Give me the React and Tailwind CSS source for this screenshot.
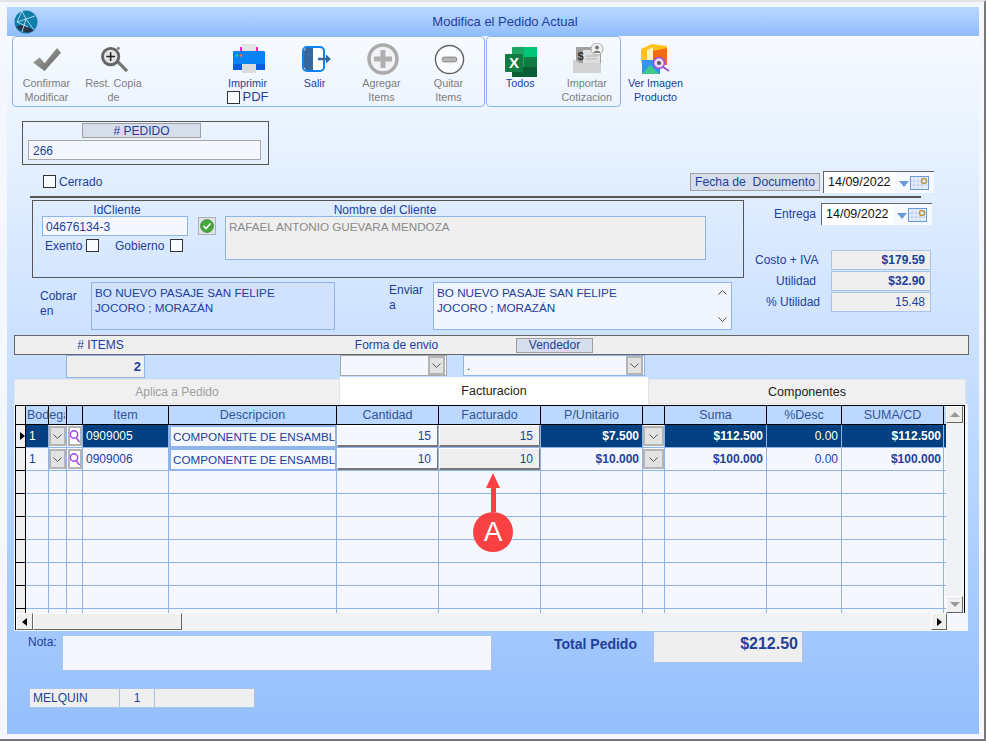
import React from "react";

const BLUE = "text-[#233f9a]";

const COLS = "grid grid-cols-[10px_23px_18px_16px_86px_168px_102px_102px_102px_22px_102px_75px_102px_3px]";

const ROWS = [
  { sel: true, bod: "1", item: "0909005", cant: "15", fact: "15", price: "$7.500", suma: "$112.500", desc: "0.00", total: "$112.500" },
  { sel: false, bod: "1", item: "0909006", cant: "10", fact: "10", price: "$10.000", suma: "$100.000", desc: "0.00", total: "$100.000" },
];

const HEADERS = ["", "Bodega", "", "", "Item", "Descripcion", "Cantidad", "Facturado", "P/Unitario", "", "Suma", "%Desc", "SUMA/CD", ""];

function Logo() {
  return (
    <svg width="24" height="24" viewBox="0 0 24 24" className="ml-[7px] mt-[3px]">
      <circle cx="12" cy="12" r="11.5" fill="#0f7ea8" />
      <path d="M2 17 C8 23 16 24 20 20 L14 17 L6 15 Z" fill="#26364a" />
      <path d="M8 1 L3 12 L12 9 L21 6 M8 1 L12 9 L20 20 M3 12 L14 17 M12 9 L8 22" stroke="#d6eaf5" strokeWidth="0.8" fill="none" />
    </svg>
  );
}

function CheckIcon() {
  return (
    <svg width="29" height="25" viewBox="0 0 30 26">
      <defs>
        <linearGradient id="chk" x1="0" y1="0" x2="1" y2="1">
          <stop offset="0" stopColor="#b0b0b0" />
          <stop offset="1" stopColor="#5c5c5c" />
        </linearGradient>
      </defs>
      <path d="M1 16 L8 11 L13 17 L26 1 L30 6 L13 25 Z" fill="url(#chk)" />
    </svg>
  );
}

function ZoomIcon() {
  return (
    <svg width="29" height="26" viewBox="0 0 30 27" className="translate-x-[1px]">
      <path d="M18 16 L27 25" stroke="#777" strokeWidth="3.5" strokeLinecap="round" />
      <circle cx="11" cy="11" r="8.500" fill="#e2e2e2" stroke="#666" strokeWidth="3" />
      <path d="M6.5 11 H15.5 M11 6.5 V15.5" stroke="#222" strokeWidth="1.6" />
      <circle cx="19" cy="2.5" r="1.5" fill="#777" />
    </svg>
  );
}

function PrinterIcon() {
  return (
    <svg width="32" height="30" viewBox="0 0 32 30" className="translate-x-[1px]">
      <rect x="7" y="3" width="18" height="8" fill="#ff1fc0" />
      <rect x="9" y="0" width="14" height="11" fill="#e4e4e4" />
      <rect x="0" y="7" width="32" height="19" rx="1" fill="#0a84f5" />
      <rect x="0" y="20" width="32" height="6" fill="#0a5fe0" />
      <circle cx="4" cy="11.500" r="1.200" fill="#39d98a" />
      <circle cx="8" cy="11.500" r="1.200" fill="#ff6a3d" />
      <rect x="9" y="20" width="14" height="9" fill="#dcdcdc" />
    </svg>
  );
}

function ExitIcon() {
  return (
    <svg width="30" height="26" viewBox="0 0 30 26" className="translate-x-[2px]">
      <rect x="1" y="1" width="21" height="24" rx="4" fill="#fff" stroke="#0a84f5" strokeWidth="2" />
      <path d="M2 5 L4 2 H11 V24 H4 L2 21 Z" fill="#36689f" />
      <path d="M16 13 H25" stroke="#36689f" strokeWidth="2.500" />
      <path d="M24 8.500 L29 13 L24 17.500 Z" fill="#36689f" />
    </svg>
  );
}

function PlusIcon() {
  return (
    <svg width="32" height="32" viewBox="0 0 32 32" className="translate-x-[1px]">
      <circle cx="16" cy="16" r="14" fill="#f1f3f6" stroke="#ababab" strokeWidth="3.500" />
      <path d="M16 7 V25 M7 16 H25" stroke="#b0b0b0" strokeWidth="5" />
    </svg>
  );
}

function MinusIcon() {
  return (
    <svg width="31" height="31" viewBox="0 0 32 32" className="translate-x-[1px]">
      <circle cx="16" cy="16" r="14.500" fill="#fbfcff" stroke="#666" strokeWidth="1.500" />
      <rect x="8.500" y="13.500" width="15" height="5" rx="2" fill="#b5b5b5" stroke="#777" strokeWidth="0.800" />
    </svg>
  );
}

function ExcelIcon() {
  return (
    <svg width="32" height="30" viewBox="0 0 32 30" className="translate-x-[1px] translate-y-[3px]">
      <rect x="7" y="0" width="25" height="30" rx="1" fill="#21a366" />
      <rect x="19" y="0" width="13" height="10" fill="#00c476" />
      <rect x="19" y="10" width="13" height="10" fill="#107c41" />
      <rect x="7" y="20" width="25" height="10" fill="#0b5e33" />
      <rect x="0" y="7" width="18" height="18" rx="1" fill="#107c41" />
      <text x="9" y="21" textAnchor="middle" fill="#fff" className="font-['Liberation_Sans',sans-serif] text-[15px] font-bold">X</text>
    </svg>
  );
}

function ImportIcon() {
  return (
    <svg width="32" height="32" viewBox="0 0 32 32" className="translate-x-[2px]">
      <rect x="3" y="4" width="25" height="20" fill="#a0a0a0" />
      <rect x="10" y="7" width="17" height="15" fill="#dedede" />
      <path d="M13 13 H24 M13 16 H24" stroke="#b5b5b5" />
      <path d="M0 16 L7 20 H28 V30 H0 Z" fill="#d2d2d2" />
      <text x="7.500" y="17" textAnchor="middle" fill="#333" className="font-['Liberation_Sans',sans-serif] text-[11px] font-bold">$</text>
      <circle cx="24" cy="6" r="6" fill="#f2f2f2" stroke="#aaa" />
      <circle cx="24" cy="4.500" r="2" fill="#777" />
      <path d="M20.500 10 C21 7 27 7 27.500 10 Z" fill="#777" />
    </svg>
  );
}

function ImageIcon() {
  return (
    <svg width="32" height="32" viewBox="0 0 32 32">
      <path d="M1 6 L12 1 L27 3 V20 H1 Z" fill="#ffc21a" />
      <path d="M7 7 L13 4 V22 H7 Z" fill="#fff3c4" />
      <path d="M13 8 L27 5 V22 H13 Z" fill="#f46a12" />
      <rect x="2" y="17" width="18" height="14" fill="#2f96ef" />
      <path d="M2 31 L10 22 L19 31 Z" fill="#41c98b" />
      <circle cx="19" cy="20" r="5.500" fill="#e9d8f7" stroke="#9a4fd0" strokeWidth="1.500" />
      <circle cx="19" cy="20" r="2" fill="#555" />
      <path d="M23 24 L29 28" stroke="#9a4fd0" strokeWidth="2" />
    </svg>
  );
}

function ToolBtn({ icon, lines, muted, children }) {
  return (
    <div className="w-[67px] h-[69px] flex flex-col items-center">
      <div className="h-[39px] pt-[5px] flex items-center justify-center">{icon}</div>
      <div className={`text-[10.8px] leading-[14px] text-center whitespace-nowrap ${muted ? "text-[#7d7d7d]" : BLUE}`}>
        {lines.map((l) => <div key={l}>{l}</div>)}
        {children}
      </div>
    </div>
  );
}

function Check({ className = "" }) {
  return <span className={`block w-[13px] h-[13px] border border-[#333] bg-[#f8fbff] ${className}`} />;
}

function Chevron() {
  return (
    <svg width="9" height="5" viewBox="0 0 9 5" fill="none">
      <path d="M0.500 0.500 L4.500 4.500 L8.500 0.500" stroke="#555" />
    </svg>
  );
}

function DropBtn({ className = "" }) {
  return (
    <span className={`flex items-center justify-center bg-[#e2e2e2] border-2 border-[#b4b4b4] ${className}`}>
      <Chevron />
    </span>
  );
}

function DateField({ className = "" }) {
  return (
    <div className={`w-[111px] h-[22px] flex items-center bg-[#f6f9ff] border-t border-l border-t-[#666] border-l-[#666] ${className}`}>
      <span className="w-[71px] pl-[4px] h-full flex items-center bg-white text-[12.5px] text-[#111]">14/09/2022</span>
      <span className="ml-[4px] w-0 h-0 mt-[2px] border-l-[5px] border-r-[5px] border-t-[6px] border-l-transparent border-r-transparent border-t-[#6a9ad8]" />
      <svg width="19" height="14" viewBox="0 0 19 14" className="ml-[1px]">
        <rect x="0.500" y="0.500" width="18" height="13" fill="#e6eefb" stroke="#6a9ad8" />
        <path d="M4 1 V13 M8 1 V13 M12 1 V13 M1 5 H18 M1 9 H18" stroke="#b5c9e8" strokeWidth="0.700" />
        <circle cx="14" cy="5" r="2.500" fill="#e6eefb" stroke="#b89a50" strokeWidth="1.500" />
      </svg>
    </div>
  );
}

function Stat({ label, value, bold, pad }) {
  return (
    <div className="flex items-center h-[20px]">
      <span className={`w-[87px] text-[12px] whitespace-nowrap ${pad} ${BLUE}`}>{label}</span>
      <span className={`w-[100px] h-[20px] flex items-center justify-end pr-[5px] bg-[#efefef] border border-[#a9c4ea] text-[12px] ${BLUE} ${bold ? "font-bold" : ""}`}>{value}</span>
    </div>
  );
}

function LensBtn() {
  return (
    <span className="flex items-center justify-center w-[14px] h-[20px] ml-[1px] bg-white border-2 border-[#b4b4b4]">
      <svg width="10" height="14" viewBox="0 0 10 14" fill="none">
        <circle cx="4" cy="5.500" r="3.700" stroke="#9a3fe0" strokeWidth="1.400" />
        <path d="M6.500 9 L9.500 13" stroke="#9a3fe0" strokeWidth="1.400" />
      </svg>
    </span>
  );
}

function GridRow({ row }) {
  const { sel } = row;
  const base = `h-[23px] border-b border-r border-[#8fb4ea] flex items-center text-[12px] ${sel ? "bg-[#024081] text-white" : "text-[#233f9a]"}`;
  const raised = "h-[23px] border-b border-r border-[#8fb4ea] flex items-center text-[12px] text-[#233f9a]";
  return (
    <div className={COLS}>
      <div className="h-[23px] bg-[#efefef] border-b border-r border-black flex items-center">
        {sel && <span className="ml-[4px] w-0 h-0 border-l-[5px] border-y-[4px] border-l-black border-y-transparent" />}
      </div>
      <div className={`${base} pl-[3px]`}>{row.bod}</div>
      <div className={`${base} !bg-[#f4f7fe]`}><DropBtn className="w-[17px] h-[20px]" /></div>
      <div className={`${base} !bg-[#f4f7fe]`}><LensBtn /></div>
      <div className={`${base} pl-[3px]`}>{row.item}</div>
      <div className="h-[23px] border-[2px] border-[#8fb4ea] bg-[#f4f7fe] flex items-center pl-[2px] text-[11.7px] text-[#233f9a] overflow-hidden whitespace-nowrap">COMPONENTE DE ENSAMBL</div>
      <div className={raised}>
        <span className="w-full h-[22px] flex items-center justify-end pr-[6px] bg-[#f4f7fe] border border-white border-r-[#777] border-b-2 border-b-[#777]">{row.cant}</span>
      </div>
      <div className={raised}>
        <span className="w-full h-[22px] flex items-center justify-end pr-[6px] bg-[#efefef] border border-white border-r-[#777] border-b-2 border-b-[#777]">{row.fact}</span>
      </div>
      <div className={`${base} justify-end pr-[3px] font-bold text-[12.5px]`}>{row.price}</div>
      <div className={`${base} !bg-[#f4f7fe]`}><DropBtn className="w-[21px] h-[20px]" /></div>
      <div className={`${base} justify-end pr-[3px] font-bold text-[12.5px]`}>{row.suma}</div>
      <div className={`${base} justify-end pr-[3px]`}>{row.desc}</div>
      <div className={`${base} justify-end pr-[2px] font-bold text-[12.5px]`}>{row.total}</div>
      <div className={`${base}`} />
    </div>
  );
}

function EmptyRow() {
  return (
    <div className={COLS}>
      <div className="h-[23px] bg-[#efefef] border-b border-r border-black" />
      {HEADERS.slice(1).map((_, i) => <div key={i} className="h-[23px] border-b border-r border-[#8fb4ea]" />)}
    </div>
  );
}

function ScrollBtn({ children, className = "" }) {
  return (
    <span className={`flex items-center justify-center bg-[#efefef] border border-white border-r-[#666] border-b-[#666] ${className}`}>{children}</span>
  );
}

export default function App() {
  return (
    <div className="w-[986px] h-[741px] bg-[#f4f7fe] border-t-2 border-t-[#e4e4e4] border-r-2 border-r-[#777] border-b-2 border-b-[#777] pl-[7px] pt-[5px] pr-[5px] pb-[5px] overflow-hidden font-['Liberation_Sans',sans-serif]">
      <div className="relative h-[727px] bg-gradient-to-b from-[#fbfdff] to-[#94bffc]">
        {/* title bar */}
        <div className="relative h-[29px] flex items-start bg-gradient-to-b from-[#b9d7fe] via-[#a6cbfe] to-[#8fbcfb]">
          <Logo />
          <div className={`absolute inset-x-0 top-0 h-[29px] flex items-center justify-center pl-[24px] text-[13px] ${BLUE}`}>Modifica el Pedido Actual</div>
        </div>

        {/* toolbar */}
        <div className="h-[71px] flex pl-[5px]">
          <div className="w-[473px] h-[71px] flex border border-[#8fb4ea] rounded-[4px]">
            <ToolBtn muted icon={<CheckIcon />} lines={["Confirmar", "Modificar"]} />
            <ToolBtn muted icon={<ZoomIcon />} lines={["Rest. Copia", "de"]} />
            <div className="w-[67px]" />
            <ToolBtn icon={<PrinterIcon />} lines={["Imprimir"]}>
              <div className="flex items-center justify-center gap-[3px] text-[13px]"><Check />PDF</div>
            </ToolBtn>
            <ToolBtn icon={<ExitIcon />} lines={["Salir"]} />
            <ToolBtn muted icon={<PlusIcon />} lines={["Agregar", "Items"]} />
            <ToolBtn muted icon={<MinusIcon />} lines={["Quitar", "Items"]} />
          </div>
          <div className="w-[135px] h-[71px] ml-[1px] flex border border-[#8fb4ea] rounded-[4px]">
            <ToolBtn icon={<ExcelIcon />} lines={["Todos"]} />
            <ToolBtn muted icon={<ImportIcon />} lines={["Importar", "Cotizacion"]} />
          </div>
          <div className="mt-[1px] ml-[1px]">
            <ToolBtn icon={<ImageIcon />} lines={["Ver Imagen", "Producto"]} />
          </div>
        </div>

        {/* pedido */}
        <div className="mt-[14px] ml-[15px] w-[247px] h-[44px] border border-[#555] flex flex-col items-start pt-[1px]">
          <div className={`ml-[59px] w-[119px] h-[15px] flex items-center justify-center bg-[#d5deea] border border-[#a0a0a0] text-[12px] ${BLUE}`}># PEDIDO</div>
          <div className={`mt-[2px] ml-[5px] w-[233px] h-[20px] flex items-center pl-[4px] pt-[1px] bg-[#f4f7fe] border border-[#a8a8a8] text-[12px] ${BLUE}`}>266</div>
        </div>

        {/* cerrado + fecha */}
        <div className="mt-[6px] h-[22px] flex items-center">
          <div className={`w-[683px] pl-[36px] pb-[1px] flex items-center gap-[3px] text-[12px] ${BLUE}`}><Check />Cerrado</div>
          <div className={`w-[130px] h-[18px] flex items-center justify-center bg-[#d5deea] border border-[#a0a0a0] text-[12.2px] whitespace-pre ${BLUE}`}>Fecha de  Documento</div>
          <DateField className="ml-[3px]" />
        </div>
        <div className="mt-[3px] ml-[23px] w-[891px] h-[2px] bg-[#555]" />

        {/* cliente */}
        <div className="mt-[2px] flex h-[130px]">
          <div className="ml-[25px] w-[712px]">
            <div className="h-[78px] border border-[#555] flex">
              <div className="w-[192px] pl-[9px] shrink-0">
                <div className={`h-[15px] w-[150px] flex items-end justify-center text-[12px] leading-[14px] translate-y-[1px] ${BLUE}`}>IdCliente</div>
                <div className={`w-[146px] h-[20px] flex items-center pl-[3px] pt-[1px] bg-[#f4f7fe] border border-[#8fb4ea] text-[12px] ${BLUE}`}>04676134-3</div>
                <div className={`mt-[2px] flex items-center h-[15px] text-[12px] ${BLUE}`}>
                  <span className="ml-[3px] w-[41px]">Exento</span><Check />
                  <span className="ml-[16px] w-[55px]">Gobierno</span><Check />
                </div>
              </div>
              <div className="mt-[16px] w-[18px] h-[18px] ml-[-27px] mr-[9px] shrink-0 bg-[#dfe4ea] border border-[#b0b0b0] flex items-center justify-center">
                <svg width="14" height="14" viewBox="0 0 14 14">
                  <circle cx="7" cy="7" r="6.500" fill="#46a83c" stroke="#2d7f2a" strokeWidth="0.600" />
                  <path d="M3.500 7 L6 9.500 L10.500 4.500" stroke="#fff" strokeWidth="1.600" fill="none" />
                </svg>
              </div>
              <div>
                <div className={`h-[15px] w-[320px] flex items-end justify-center text-[12px] leading-[14px] translate-y-[1px] ${BLUE}`}>Nombre del Cliente</div>
                <div className="w-[481px] h-[44px] pl-[3px] pt-[1px] bg-[#efefef] border border-[#8fb4ea] text-[11.7px] text-[#8a8a8a]">RAFAEL ANTONIO GUEVARA MENDOZA</div>
              </div>
            </div>
            <div className={`mt-[4px] h-[48px] flex text-[12px] ${BLUE}`}>
              <div className="w-[59px] pl-[8px] pt-[7px] leading-[15px]">Cobrar<br />en</div>
              <div className="w-[244px] h-[48px] pl-[3px] pt-[2px] leading-[15px] text-[11.7px] bg-[#d0e2fd] border border-[#8fb4ea]">BO NUEVO PASAJE SAN FELIPE<br />JOCORO ; MORAZÁN</div>
              <div className="ml-[54px] w-[44px] pt-[1px] leading-[15px]">Enviar<br />a</div>
              <div className="relative w-[299px] h-[48px] pl-[3px] pt-[2px] leading-[15px] text-[11.7px] bg-[#f0f5fe] border border-[#8fb4ea]">
                BO NUEVO PASAJE SAN FELIPE<br />JOCORO ; MORAZÁN
                <span className="absolute right-[2px] inset-y-0 w-[14px] flex flex-col justify-between items-center py-[7px]">
                  <span className="rotate-180 flex"><Chevron /></span>
                  <Chevron />
                </span>
              </div>
            </div>
          </div>
          <div className="pt-[3px]">
            <div className={`flex items-center h-[22px] pl-[30px] text-[12px] ${BLUE}`}>
              <span className="w-[47px]">Entrega</span>
              <DateField />
            </div>
            <div className="mt-[25px] flex flex-col gap-[1px]">
              <Stat label="Costo + IVA" value="$179.59" bold pad="pl-[11px]" />
              <Stat label="Utilidad" value="$32.90" bold pad="pl-[32px]" />
              <Stat label="% Utilidad" value="15.48" pad="pl-[22px]" />
            </div>
          </div>
        </div>

        {/* band */}
        <div className={`mt-[5px] ml-[7px] w-[955px] h-[20px] flex items-center bg-[#efefef] border border-[#666] text-[12px] ${BLUE}`}>
          <span className="w-[171px] text-center"># ITEMS</span>
          <span className="w-[421px] text-center">Forma de envio</span>
          <span className="ml-[-91px] w-[77px] h-[15px] flex items-center justify-center bg-[#d5deea] border border-[#a0a0a0]">Vendedor</span>
        </div>
        <div className={`h-[22px] flex text-[12px] ${BLUE}`}>
          <div className="ml-[59px] w-[79px] h-[23px] pr-[3px] flex items-center justify-end bg-[#efefef] border border-[#8fb4ea] font-bold text-[13px]">2</div>
          <div className="ml-[195px] w-[107px] h-[21px] flex justify-end bg-[#f4f7fe] border border-[#a8a8a8]"><DropBtn className="w-[17px] h-[19px] mr-[1px]" /></div>
          <div className="ml-[16px] w-[182px] h-[21px] flex items-center justify-between pl-[3px] bg-[#f4f7fe] border border-[#8fb4ea]">.<DropBtn className="w-[17px] h-[19px] mr-[1px]" /></div>
        </div>

        {/* tabs */}
        <div className="ml-[7px] h-[27px] flex text-[12px] items-end">
          <div className="w-[326px] h-[25px] pt-[1px] flex items-center justify-center bg-[#f0f0f0] border border-[#e4e4e4] text-[#a0a0a0]">Aplica a Pedido</div>
          <div className="w-[308px] h-[27px] pt-[1px] flex items-center justify-center bg-white text-[#222] text-[12.5px]">Facturacion</div>
          <div className="w-[318px] h-[25px] pt-[1px] flex items-center justify-center bg-[#f0f0f0] border border-[#e4e4e4] text-[#222] text-[12.5px]">Componentes</div>
        </div>

        {/* grid */}
        <div className="ml-[7px] w-[954px] h-[227px] bg-[#f4f7fe] pl-[1px] pt-[1px]">
          <div className="w-[950px] h-[208px] flex border-t border-l border-r border-black">
            <div className="w-[930px] h-[207px] overflow-hidden">
              <div className={COLS}>
                {HEADERS.map((h, i) => (
                  <div key={i} className={`h-[19px] pt-[1px] border-r border-b border-black flex items-center justify-center whitespace-nowrap text-[12.5px] text-[#2f5597] ${i === 0 ? "bg-[#efefef]" : "bg-[#bdd8fe]"} ${i === 1 ? "!justify-start pl-[1px]" : ""}`}>{i === 1 ? <span className="w-[38px] overflow-hidden relative z-10 shrink-0">{h}</span> : h}</div>
                ))}
              </div>
              {ROWS.map((r) => <GridRow key={r.item} row={r} />)}
              {[0, 1, 2, 3, 4, 5, 6].map((i) => <EmptyRow key={i} />)}
            </div>
            <div className="w-[18px] h-[207px] flex flex-col justify-between bg-[#f0f2f5]">
              <ScrollBtn className="w-[17px] h-[17px]"><span className="w-0 h-0 border-x-[5px] border-b-[5px] border-x-transparent border-b-[#999]" /></ScrollBtn>
              <ScrollBtn className="w-[17px] h-[17px]"><span className="w-0 h-0 border-x-[5px] border-t-[5px] border-x-transparent border-t-[#999]" /></ScrollBtn>
            </div>
          </div>
          <div className="w-[932px] h-[17px] flex bg-[#f1f3f6] border-l border-black">
            <ScrollBtn className="w-[17px] h-[17px]"><span className="w-0 h-0 border-y-[4px] border-r-[5px] border-y-transparent border-r-black" /></ScrollBtn>
            <span className="w-[149px] h-[17px] bg-[#efefef] border border-white border-r-[#666] border-b-[#666]" />
            <span className="flex-1" />
            <ScrollBtn className="w-[16px] h-[17px]"><span className="w-0 h-0 border-y-[4px] border-l-[5px] border-y-transparent border-l-black" /></ScrollBtn>
          </div>
        </div>

        {/* bottom */}
        <div className="flex">
          <div className={`pl-[21px] w-[485px] shrink-0 flex text-[12px] ${BLUE}`}>
            <span className="w-[34px] mt-[2px]">Nota:</span>
            <div className="mt-[4px] w-[430px] h-[36px] bg-[#f4f7fe] border border-[#a9c4ea]" />
          </div>
          <div className={`ml-[62px] w-[99px] pt-[3px] text-[14px] font-bold whitespace-nowrap ${BLUE}`}>Total Pedido</div>
          <div className={`w-[150px] h-[32px] flex justify-end pr-[4px] text-[16px] font-bold ${BLUE} bg-[#efefef] border border-[#a9c4ea]`}>$212.50</div>
        </div>
        <div className={`mt-[17px] ml-[22px] flex h-[20px] text-[12px] ${BLUE}`}>
          <div className="w-[91px] pl-[3px] flex items-center bg-[#efefef] border border-[#a9c4ea]">MELQUIN</div>
          <div className="w-[35px] flex items-center justify-center bg-[#efefef] border-y border-r border-[#a9c4ea]">1</div>
          <div className="w-[100px] bg-[#efefef] border-y border-r border-[#a9c4ea]" />
        </div>

        {/* annotation */}
        <div className="absolute left-[466px] top-[466px] w-[40px] flex flex-col items-center">
          <span className="w-0 h-0 border-x-[7.5px] border-b-[15px] border-x-transparent border-b-[#f94144]" />
          <span className="w-[5px] h-[24px] bg-[#f94144]" />
          <span className="w-[40px] h-[40px] rounded-full bg-[#f94144] flex items-center justify-center text-white text-[28px] leading-none">A</span>
        </div>
      </div>
    </div>
  );
}
